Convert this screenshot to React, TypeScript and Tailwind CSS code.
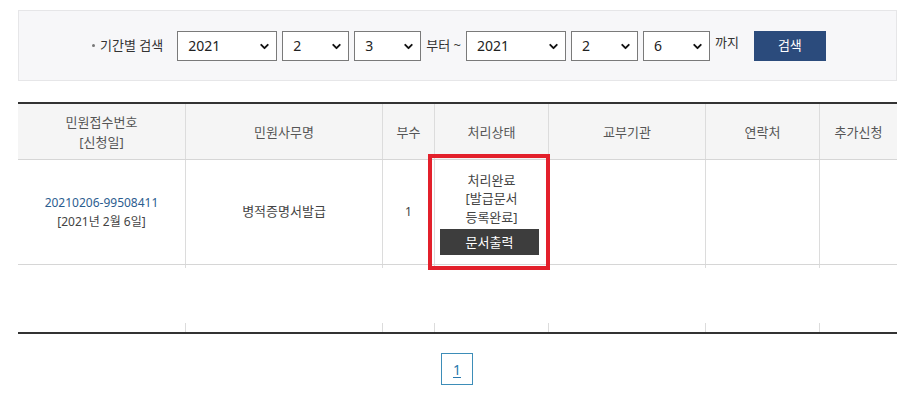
import { ChevronDown } from "lucide-react";

const font = { fontFamily: '"Noto Sans", "Noto Sans CJK KR", sans-serif' };

const cols = "grid grid-cols-[167px_197px_52px_114px_157px_114px_78px]";

const headers = [
  ["민원접수번호", "[신청일]"],
  ["민원사무명"],
  ["부수"],
  ["처리상태"],
  ["교부기관"],
  ["연락처"],
  ["추가신청"],
];

function Select({ value, width }: { value: string; width: string }) {
  return (
    <div
      className={`relative flex h-[30px] ${width} items-center border border-[#7a7a7a] bg-white pl-[10px] text-[14px] text-[#222]`}
    >
      <span>{value}</span>
      <ChevronDown
        size={13}
        strokeWidth={3.5}
        className="absolute right-[5px] top-[8px] text-[#111]"
      />
    </div>
  );
}

export default function App() {
  return (
    <div
      className="w-[901px] h-[410px] bg-white pl-[18px] pt-[10px] text-[#444]"
      style={font}
    >
      {/* search */}
      <div className="flex h-[71px] w-[879px] items-center border border-[#e6e6e8] bg-[#f7f7f9] pl-[73px]">
        <span className="mr-[5px] h-[3px] w-[3px] rounded-full bg-[#777]" />
        <span className="mr-[14px] text-[13px] text-[#333]">기간별 검색</span>
        <div className="flex items-center gap-[5px]">
          <Select value="2021" width="w-[100px]" />
          <Select value="2" width="w-[67px]" />
          <Select value="3" width="w-[67px]" />
        </div>
        <span className="mx-[5px] text-[13px] text-[#333]">부터 ~</span>
        <div className="flex items-center gap-[5px]">
          <Select value="2021" width="w-[100px]" />
          <Select value="2" width="w-[67px]" />
          <Select value="6" width="w-[67px]" />
        </div>
        <span className="ml-[5px] mr-[15px] -mt-[6px] text-[13px] text-[#333]">까지</span>
        <button className="h-[30px] w-[72px] bg-[#2b4b7c] text-[13px] text-white">
          검색
        </button>
      </div>

      {/* table */}
      <div className="relative mt-[21px] w-[879px] border-t-2 border-b-2 border-[#333]">
        <div className={`${cols} h-[56px] border-b border-[#d6d6d6] bg-[#f5f5f5] text-[13px] text-[#555]`}>
          {headers.map((h, i) => (
            <div
              key={i}
              className={`flex flex-col items-center justify-center leading-[20px] ${i > 0 ? "border-l border-[#dcdcdc]" : ""}`}
            >
              {h.map((t) => (
                <span key={t}>{t}</span>
              ))}
            </div>
          ))}
        </div>

        <div className={`${cols} h-[105px] border-b border-[#d6d6d6] text-[13px] text-[#444]`}>
          <div className="flex flex-col items-center justify-center text-[12px] leading-[19px]">
            <span className="text-[#2c5d8f]">20210206-99508411</span>
            <span>[2021년 2월 6일]</span>
          </div>
          <div className="flex items-center justify-center border-l border-[#dcdcdc]">
            병적증명서발급
          </div>
          <div className="flex items-center justify-center border-l border-[#dcdcdc] text-[12px]">
            1
          </div>
          <div className="flex flex-col items-center justify-center border-l border-[#dcdcdc] pt-[2px] leading-[18.5px]">
            <span>처리완료</span>
            <span>[발급문서</span>
            <span>등록완료]</span>
            <button className="mt-[3px] ml-[5px] h-[26px] w-[99px] self-start bg-[#3d3d3d] text-[13px] text-white">
              문서출력
            </button>
          </div>
          <div className="border-l border-[#dcdcdc]" />
          <div className="border-l border-[#dcdcdc]" />
          <div className="border-l border-[#dcdcdc]" />
        </div>

        <div className={`${cols} h-[3px]`}>
          {headers.map((_, i) => (
            <div key={i} className={i > 0 ? "border-l border-[#dcdcdc]" : ""} />
          ))}
        </div>
        <div className="h-[55px]" />
        <div className={`${cols} h-[9px]`}>
          {headers.map((_, i) => (
            <div key={i} className={i > 0 ? "border-l border-[#dcdcdc]" : ""} />
          ))}
        </div>

        {/* highlight box */}
        <div className="pointer-events-none absolute left-[410px] top-[50px] h-[116px] w-[122px] border-[4px] border-[#e3202b]" />
      </div>

      {/* pagination */}
      <div className="mt-[19px] flex w-[879px] justify-center">
        <span className="ml-[-1px] flex h-[32px] w-[32px] items-center justify-center border border-[#3d8db8] text-[14px] text-[#2a78ad] underline underline-offset-2">
          1
        </span>
      </div>
    </div>
  );
}
